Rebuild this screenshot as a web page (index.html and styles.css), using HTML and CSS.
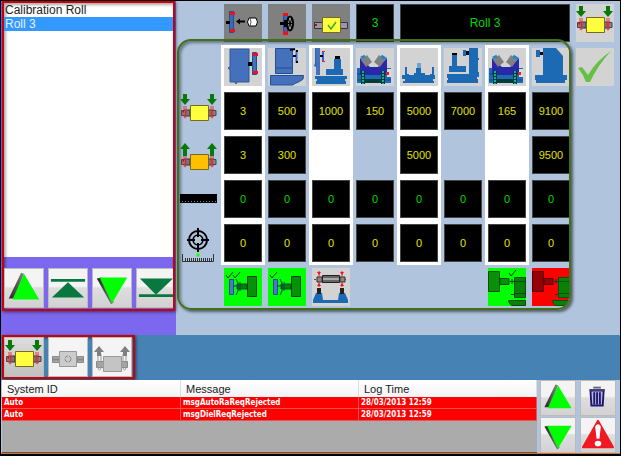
FILE: index.html
```html
<!DOCTYPE html>
<html lang="en">
<head>
<meta charset="utf-8">
<title>Roll Setup</title>
<link rel="stylesheet" href="styles.css">
</head>
<body>
<svg class="defs" aria-hidden="true">
  <defs>
    <linearGradient id="shade" x1="0" x2="1"><stop offset="0" stop-color="#222"/><stop offset="1" stop-color="#888"/></linearGradient>
    <symbol id="ends" viewBox="0 0 38 38">
      <path d="M4 18h6v6H4zM28 18h6v6h-6z" fill="#777" stroke="#333"/>
      <path d="M1.500 18.500h4v5h-4zM32 18.500h4v5h-4z" fill="#888" stroke="#444"/>
      <path d="M4 14v10q0 2 1 2t1-2V14M31 14v10q0 2 1 2t1-2V14" fill="none" stroke="#f03040"/>
      <path d="M2.500 18.500h1.500v2H2.500z" fill="#d00"/>
    </symbol>
    <symbol id="roll-down" viewBox="0 0 38 38">
      <use href="#ends"/>
      <path d="M10.500 13.500h18v15h-18z" fill="#ffff40" stroke="#7a6a20"/>
      <path d="M3 2h4v5h3l-5 6-5-6h3zM30 2h4v5h3l-5 6-5-6h3z" fill="#087808"/>
    </symbol>
    <symbol id="roll-up" viewBox="0 0 38 38">
      <use href="#ends" y="5"/>
      <path d="M10.500 18.500h18v15h-18z" fill="#ffc000" stroke="#7a6a20"/>
      <path d="M5 7l5 6H7v7H3v-7H0zM32 7l5 6h-3v7h-4v-7h-3z" fill="#087808"/>
    </symbol>
    <symbol id="ruler" viewBox="0 0 38 38">
      <path d="M0 14h37v9H0z"/>
      <path d="M2 21.500h34" stroke="#888" stroke-dasharray="1 2"/>
    </symbol>
    <symbol id="target" viewBox="0 0 38 38">
      <g fill="none" stroke="#000"><circle cx="18" cy="16" r="9" stroke-width="2"/><circle cx="18" cy="16" r="5" stroke-width="1.500"/>
      <path d="M18 4v9M18 19v9M7 16h8M21 16h8" stroke-width="2"/>
      <path d="M2.500 30v7.500h31V30" stroke="#333"/><path d="M5 35.500h28" stroke="#333" stroke-width="3" stroke-dasharray="1 1"/></g>
      <circle cx="18" cy="31" r="1.800" fill="#2f0"/>
    </symbol>
    <symbol id="load" viewBox="0 0 38 38">
      <path d="M5.500 7.500h4v21h-4z" fill="#3a68c0" stroke="#205090"/>
      <path d="M6 8h5v3H6zM6 25h5v3H6z" fill="#f01020"/>
      <path d="M2 17h4v3H2zM12 17.500l4-3v2h5v2h-5v2z"/>
      <path d="M25 14h7q3 4 0 8h-7q-3-4 0-8z" fill="#fff" stroke="#000"/><path d="M26 14q2 4 0 8" fill="none" stroke="#555"/>
    </symbol>
    <symbol id="wheel" viewBox="0 0 38 38">
      <path d="M15.500 9.500h4v20h-4z" fill="#3a68c0" stroke="#205090"/>
      <path d="M15 9h5v3h-5zM15 27h5v4h-5z" fill="#f01020"/>
      <path d="M12 18h5v3h-5zM16 16h4v7h-4z"/>
      <ellipse cx="22" cy="19.500" rx="3" ry="7" fill="#999" stroke="#000" stroke-width="2"/><path d="M20 14l4 11M20 25l4-11M19 19.500h6" stroke="#000"/>
    </symbol>
    <symbol id="roll-ok" viewBox="0 0 38 38">
      <path d="M2.500 18.500h8v6h-8zM28.500 18.500h7v6h-7z" fill="#99a" stroke="#334"/>
      <path d="M3 20h2v2H3z" fill="#d00"/>
      <path d="M10.500 13.500h18v15h-18z" fill="#ffff40" stroke="#7a6a20"/>
      <path d="M16 21l3 4 5-7" fill="none" stroke="#40a820" stroke-width="1.500"/>
    </symbol>
    <symbol id="m1" viewBox="0 0 38 38">
      <path d="M6 1h19v33H13l-1 2-1-2H6V22l-2-2 2-1z" fill="#4570bc" stroke="#305898"/>
      <path d="M24 14h5v4h-5z"/><path d="M28.500 4.500h4v22h-4z" fill="#4570bc" stroke="#205090"/>
      <path d="M29 5h5v3h-5zM29 23h5v3h-5z" fill="#f01020"/>
    </symbol>
    <symbol id="m2" viewBox="0 0 38 38">
      <path d="M7.500.5h17v25h-17zM2.500 27.500h33q1 4-4 6t-7 3.500h-22z" fill="#4570bc" stroke="#234f94"/>
      <path d="M8 20h17" stroke="#234f94"/><path d="M28.500 2v13" stroke="#36c" stroke-width="2"/><path d="M25 8h3M28 3h2M28 14h2M22 2l5-1" stroke="#000" stroke-width="2"/>
    </symbol>
    <symbol id="m3" viewBox="0 0 38 38">
      <path d="M3 0h5v27H4v-8l-2-1 1-3zM3 28h32v3h-2v2h1v3H4v-3h1v-2H3zM14 21h8v-10h7v10h2v6H14z" fill="#1c6ab4"/>
      <path d="M4 0h4v27H4z" fill="#4570bc"/><path d="M11 3v11" stroke="#36c" stroke-width="2"/><path d="M10 3h3v1h-3zM10 13h3v1h-3z" fill="#e23"/><path d="M8 7h3v2H8zM23 8h5v3h-5z"/>
    </symbol>
    <symbol id="m4" viewBox="0 0 38 38">
      <path d="M1 20h34v15H1z" fill="#1c6ab4"/><path d="M1 26h34M1 32h34" stroke="#114a85"/>
      <path d="M4 10l10 9h8l9-9v17H4z" fill="#2828a8"/>
      <path d="M5 12l6-5 5 7-6 5zM18 14l5-7 6 5-5 7z" fill="#808080"/><path d="M5 10l4-2M25 8l5 3" stroke="#2086c8" stroke-width="3"/>
      <path d="M7 23v13M27 23v13M7 33h20" stroke="#003c38" stroke-width="4"/><path d="M7 23v13M27 23v13" stroke="#12b09a" stroke-width="2" stroke-dasharray="2 1"/>
      <path d="M31 21h4v8h-4z" fill="#ddd"/><path d="M30 24h3v3h-3z" fill="#e02030"/>
    </symbol>
    <symbol id="m5" viewBox="0 0 38 38">
      <path d="M2 27h3V19h2v7h2v1h5v-2h2v-5h5v5h4v2h5v-1h2v-7h2v8h1v4h-2v2h1v2H3v-2h2v-2H2z" fill="#1c6ab4"/><path d="M17 15h4v5h-4z" fill="#69a5d8"/>
    </symbol>
    <symbol id="m6" viewBox="0 0 38 38">
      <path d="M3 26h2v-8h3V7h5v11h9v6H5v2h20V0h9v10h1v2h-1v12h1v5h-2v2h1v4H3v-3h1v-2H3zM19 2h3v6h-3z" fill="#1c6ab4"/><path d="M8 5h5v2H8zM22 3h3v4h-3z"/><path d="M22 20h3v4h-3z" fill="#d3d3d3"/>
    </symbol>
    <symbol id="m8" viewBox="0 0 38 38">
      <path d="M3 27h8V0h13l7 8v19h4v5h-2v3H4v-3H3zM4 2h4v7H4z" fill="#1c6ab4"/><path d="M8 4h3v3H8z"/>
    </symbol>
    <symbol id="spindle" viewBox="0 0 38 38">
      <path d="M13 16h10v5H13z" fill="#078007" stroke="#053"/><path d="M23.500 8.500h9v20h-9z" fill="#089008" stroke="#040"/>
      <path d="M5.500 11.500h4v15h-4z" fill="#4878c8" stroke="#205090"/><path d="M12 11l2 4v8l-2 4M9 18h5M16 14v9" stroke="#104050" stroke-width="1" fill="none"/>
    </symbol>
    <symbol id="supports" viewBox="0 0 38 38">
      <path d="M2 11.500h33" stroke="#555" stroke-dasharray="2 1"/><path d="M5 9h5v5H5zM28 9h5v5h-5z" fill="#888" stroke="#333"/>
      <path d="M10.500 7.500h17v7h-17z" fill="#666" stroke="#222"/><path d="M11 11h16" stroke="#aaa" stroke-width="2"/>
      <path d="M7 3v6M7 14v5M30 3v6M30 14v5" stroke="#e22"/><path d="M5 4h4l-2 3zM5 18h4l-2-3zM28 4h4l-2 3zM28 18h4l-2-3z" fill="#f01020"/>
      <path d="M1 35v-3l3-7h6l1 7h15l1-7h6l3 7v3z" fill="#1c6ab4"/><path d="M5 20h4v6H5zM28 20h4v6h-4z" fill="#222"/>
    </symbol>
    <symbol id="tail" viewBox="0 0 38 38">
      <path d="M26.500 9.500h11v20h-11zM20.500 32.500h17v5h-14q-3-2-3-5z" fill="#078007" stroke="#065006"/>
      <path d="M27 13.500h10M27 25.500h10" stroke="#065006"/><path d="M24 11v5M22 13.500h4M23 26.500h3" stroke="#134"/>
    </symbol>
    <symbol id="up" viewBox="0 0 40 40"><path d="M4 31L17 4l3 1-10 26z" fill="url(#shade)"/><path d="M8 32L20 5l16 27z" fill="#0f0"/></symbol>
    <symbol id="down" viewBox="0 0 40 40"><path d="M4 10l15 27 3-2L9 9z" fill="url(#shade)"/><path d="M7 9h29L20 36z" fill="#0f0"/></symbol>
    <symbol id="first" viewBox="0 0 40 40"><path d="M3 30l17-16 17 16z" fill="#087840"/><path d="M2 12h36" stroke="#087840" stroke-width="3"/></symbol>
    <symbol id="last" viewBox="0 0 40 40"><path d="M3 10h35L20 27z" fill="#087840"/><path d="M2 28h36" stroke="#087840" stroke-width="3"/></symbol>
    <symbol id="grey-turn" viewBox="0 0 38 38">
      <path d="M3.500 18.500h7v6h-7zM28.500 18.500h6v6h-6z" fill="#aaa" stroke="#888"/><path d="M4 21.500h30" stroke="#888" stroke-width="2"/>
      <path d="M10.500 13.500h17v15h-17z" fill="#ccc" stroke="#999"/><circle cx="19" cy="21" r="3" fill="none" stroke="#888" stroke-dasharray="4 1"/>
    </symbol>
    <symbol id="grey-up" viewBox="0 0 38 38">
      <path d="M3.500 23.500h7v6h-7zM28.500 23.500h6v6h-6z" fill="#aaa" stroke="#888"/><path d="M5 16v13q0 3 1.500 3T8 29V16M30 16v13q0 3 1.500 3t1.500-3V16" fill="none" stroke="#999"/>
      <path d="M10.500 18.500h18v15h-18z" fill="#c4c4c4" stroke="#999"/><path d="M6 8l5 6H8v4H4v-4H1zM32 8l5 6h-3v4h-4v-4h-3z" fill="#808080"/>
    </symbol>
  </defs>
</svg>
<div class="app">
  <div class="top">
    <aside class="side">
      <div class="picker callout">
        <ul class="rolls" role="listbox" aria-label="Rolls">
          <li role="option" aria-selected="false">Calibration Roll</li>
          <li class="selected" role="option" aria-selected="true">Roll 3</li>
        </ul>
        <div class="keys">
          <button class="key" aria-label="Up"><svg><use href="#up"/></svg></button>
          <button class="key" aria-label="First"><svg><use href="#first"/></svg></button>
          <button class="key" aria-label="Down"><svg><use href="#down"/></svg></button>
          <button class="key" aria-label="Last"><svg><use href="#last"/></svg></button>
        </div>
      </div>
    </aside>
    <main class="main">
      <section class="work">
        <div class="tools">
          <button class="tile dark" aria-label="Load"><svg><use href="#load"/></svg></button>
          <button class="tile dark" aria-label="Wheel"><svg><use href="#wheel"/></svg></button>
          <button class="tile dark" aria-label="Roll check"><svg><use href="#roll-ok"/></svg></button>
          <output class="tile black green name">3</output>
          <output class="tile black green name wide">Roll 3</output>
        </div>
        <div class="matrix">
          <table class="grid">
            <colgroup><col class="head"><col span="8" class="axis"></colgroup>
            <tbody class="striped">
            <tr><td></td>
              <td><div class="tile"><svg><use href="#m1"/></svg></div></td><td><div class="tile"><svg><use href="#m2"/></svg></div></td>
              <td><div class="tile"><svg><use href="#m3"/></svg></div></td><td><div class="tile"><svg><use href="#m4"/></svg></div></td>
              <td><div class="tile"><svg><use href="#m5"/></svg></div></td><td><div class="tile"><svg><use href="#m6"/></svg></div></td>
              <td><div class="tile"><svg><use href="#m4"/></svg></div></td><td><div class="tile"><svg><use href="#m8"/></svg></div></td></tr>
            <tr><th><svg><use href="#roll-down"/></svg></th>
              <td><div class="tile black">3</div></td><td><div class="tile black">500</div></td><td><div class="tile black">1000</div></td><td><div class="tile black">150</div></td>
              <td><div class="tile black">5000</div></td><td><div class="tile black">7000</div></td><td><div class="tile black">165</div></td><td><div class="tile black">9100</div></td></tr>
            <tr><th><svg><use href="#roll-up"/></svg></th>
              <td><div class="tile black">3</div></td><td><div class="tile black">300</div></td><td></td><td></td>
              <td><div class="tile black">5000</div></td><td></td><td></td><td><div class="tile black">9500</div></td></tr>
            <tr><th><svg><use href="#ruler"/></svg></th>
              <td><div class="tile black green">0</div></td><td><div class="tile black green">0</div></td><td><div class="tile black green">0</div></td><td><div class="tile black green">0</div></td>
              <td><div class="tile black green">0</div></td><td><div class="tile black green">0</div></td><td><div class="tile black green">0</div></td><td><div class="tile black green">0</div></td></tr>
            <tr><th><svg><use href="#target"/></svg></th>
              <td><div class="tile black">0</div></td><td><div class="tile black">0</div></td><td><div class="tile black">0</div></td><td><div class="tile black">0</div></td>
              <td><div class="tile black">0</div></td><td><div class="tile black">0</div></td><td><div class="tile black">0</div></td><td><div class="tile black">0</div></td></tr>
            </tbody>
            <tbody>
            <tr><td></td>
              <td><div class="tile on"><svg viewBox="0 0 38 38"><use href="#spindle"/><path d="M2 7l2 3 5-6M9 7l2 3 5-6" fill="none" stroke="#053805"/></svg></div></td>
              <td><div class="tile on"><svg viewBox="0 0 38 38"><use href="#spindle"/><path d="M2 7l2 3 5-6" fill="none" stroke="#053805"/></svg></div></td>
              <td><div class="tile"><svg><use href="#supports"/></svg></div></td>
              <td></td><td></td><td></td>
              <td><div class="tile on"><svg viewBox="0 0 38 38"><path d="M.5 3.500h11v20H.5zM12 10.500h9v6h-9z" fill="#089008" stroke="#065006"/><use href="#tail"/><path d="M21 5l2 3 5-6" fill="none" stroke="#053805"/></svg></div></td>
              <td><div class="tile fault"><svg viewBox="0 0 38 38"><path d="M.5 3.500h11v20H.5zM12 10.500h9v6h-9z" fill="#980008" stroke="#500"/><use href="#tail"/></svg></div></td></tr>
            </tbody>
          </table>
        </div>
      </section>
      <div class="actions">
        <button class="tile" aria-label="Lower roll"><svg><use href="#roll-down"/></svg></button>
        <button class="tile" aria-label="Accept"><svg viewBox="0 0 38 38"><path d="M2 20l4-1 6 8Q20 13 35 3q-13 14-21 31h-4Q7 26 2 20z" fill="#66c044"/></svg></button>
      </div>
    </main>
  </div>
  <nav class="bar">
    <div class="modes callout">
      <button class="key active" aria-label="Lower"><svg><use href="#roll-down"/></svg></button>
      <button class="key pale" aria-label="Rotate"><svg><use href="#grey-turn"/></svg></button>
      <button class="key pale" aria-label="Raise"><svg><use href="#grey-up"/></svg></button>
    </div>
  </nav>
  <footer class="log">
    <div class="messages">
      <table>
        <colgroup><col class="c1"><col class="c2"><col></colgroup>
        <thead><tr><th>System ID</th><th>Message</th><th>Log Time</th></tr></thead>
        <tbody>
          <tr><td>Auto</td><td>msgAutoRaReqRejected</td><td>28/03/2013 12:59</td></tr>
          <tr><td>Auto</td><td>msgDielReqRejected</td><td>28/03/2013 12:59</td></tr>
        </tbody>
      </table>
    </div>
    <div class="pad">
      <button class="key" aria-label="Scroll up"><svg><use href="#up"/></svg></button>
      <button class="key" aria-label="Delete"><svg viewBox="0 0 36 36"><path d="M10 10h14l-1 16H11z" fill="#b8b8dc" stroke="#201870" stroke-width="2"/><path d="M14 12v13M17 12v13M20 12v13" stroke="#201870" stroke-width="2"/><path d="M9 9.500h16" stroke="#404080" stroke-width="2"/><path d="M13 7h8" stroke="#667" stroke-width="2"/></svg></button>
      <button class="key" aria-label="Scroll down"><svg><use href="#down"/></svg></button>
      <button class="key" aria-label="Alarm"><svg viewBox="0 0 36 36"><path d="M18 3l16 28H2z" fill="#f01822" stroke="#f01822" stroke-width="2" stroke-linejoin="round"/><path d="M15 9q3-5 6 0l-1.500 13h-3z" fill="#fff"/><ellipse cx="18" cy="27" rx="3.500" ry="3" fill="#fff"/></svg></button>
    </div>
  </footer>
</div>
</body>
</html>
```
FILE: styles.css
```css
* { box-sizing: border-box; }

body {
  margin: 0;
  background: #000;
  font-family: "Liberation Sans", Arial, sans-serif;
  font-size: 12px;
}

button { font: inherit; padding: 0; border: 0; }
svg { display: block; width: 100%; height: 100%; }
.defs { position: absolute; width: 0; height: 0; }

.app {
  display: flex;
  flex-direction: column;
  min-height: 100vh;
  border: 1px solid #000;
  border-bottom-width: 2px;
  background: #b0c4de;
}

.top { display: flex; }

.side {
  flex: none;
  width: 175px;
  padding: 0 1px 24px;
  background: #7b68ee;
}

.callout {
  border: 2px solid #c80008;
  box-shadow: 1px 1px 3px #0008, inset 1px 1px 3px #0008;
}

.picker { overflow: hidden; }

.rolls {
  height: 254px;
  margin: 0;
  padding: 0;
  list-style: none;
  background: #fff;
  line-height: 14px;
  color: #222;
  box-shadow: inset 2px 2px 3px #0005;
}

.rolls li { padding-left: 1px; }
.rolls .selected { background: #3399ff; color: #e4f0ff; }

.keys { display: flex; gap: 4px; padding: 11px 0 1px; }

.key {
  flex: none;
  width: 40px;
  height: 40px;
  border: 1px solid #bbb;
  background: linear-gradient(#f4f4f4 0 45%, #dedede 50%, #d2d2d2);
}

.key.pale { background: #f4f4f4; }
.key.active { background: linear-gradient(#ddd, #c0c0c0); }

.main {
  flex: 1;
  min-width: 0;
  display: flex;
  gap: 5px;
  padding: 3px 6px 0 1px;
}

.work { flex: 1; min-width: 0; }
.tools { display: flex; gap: 6px; padding: 0 1px 0 47px; }

.tile {
  display: flex;
  flex: none;
  align-items: center;
  justify-content: center;
  width: 38px;
  height: 38px;
  background: #d3d3d3;
  font-size: 11px;
  font-weight: normal;
}

.tile.dark { background: #808080; }
.tile.black { background: #000; color: #e0e000; border: 1px solid #444; }
.tile.green,
.tile.black.green { color: #00d800; }
.tile.name { font-size: 12px; }
.tile.wide { flex: 1; }
.tile.on { background: #00ff00; }
.tile.fault { background: #ff0000; }

.matrix {
  position: relative;
  overflow: hidden;
  margin-top: -3px;
  padding-top: 4px;
  border: 2px solid #417018;
  border-radius: 14px;
  box-shadow: 2px 2px 3px #0008, inset 2px 2px 3px #0006;
}

.grid { table-layout: fixed; width: 394px; border-spacing: 0; }
.grid .head { width: 42px; }
.grid .axis { width: 44px; }
.grid td, .grid th { height: 44px; padding: 3px; }
.grid th { padding: 3px 3px 3px 1px; }
.grid th svg { width: 38px; height: 38px; }
.striped td:nth-child(even) { background: #fff; }
.grid tbody:last-child td { padding-bottom: 2px; height: 43px; }

.actions { display: flex; flex-direction: column; gap: 6px; }

.bar { background: #4682b4; padding: 0 1px 1px; display: flex; }
.modes { display: flex; gap: 4px; padding: 0 1px 0 0; }

.log { flex: 1; display: flex; border-bottom: 1px solid #d07030; }

.messages {
  flex: 1;
  min-width: 0;
  margin-left: 1px;
  background: #ababab;
  border-bottom: 1px solid #555;
}

.messages table { table-layout: fixed; width: 100%; border-spacing: 0; }
.messages .c1 { width: 179px; }
.messages .c2 { width: 178px; }

.messages th {
  height: 17px;
  padding: 0 5px;
  background: linear-gradient(#fff, #f2f3f5);
  border-right: 1px solid #ddd;
  font-size: 11px;
  font-weight: normal;
  line-height: 16px;
  text-align: left;
  color: #222;
}

.messages td {
  padding: 0 2px;
  background: #ff0000;
  border-bottom: 1px solid #f05050;
  border-right: 1px solid #f05050;
  color: #fff;
  font: bold 8px/11px "DejaVu Sans Condensed", "DejaVu Sans", sans-serif;
}

.pad { display: grid; grid-template-columns: 36px 36px; gap: 1px 4px; padding: 0 4px 0 3px; }
.pad .key { width: 36px; height: 36px; }
```
